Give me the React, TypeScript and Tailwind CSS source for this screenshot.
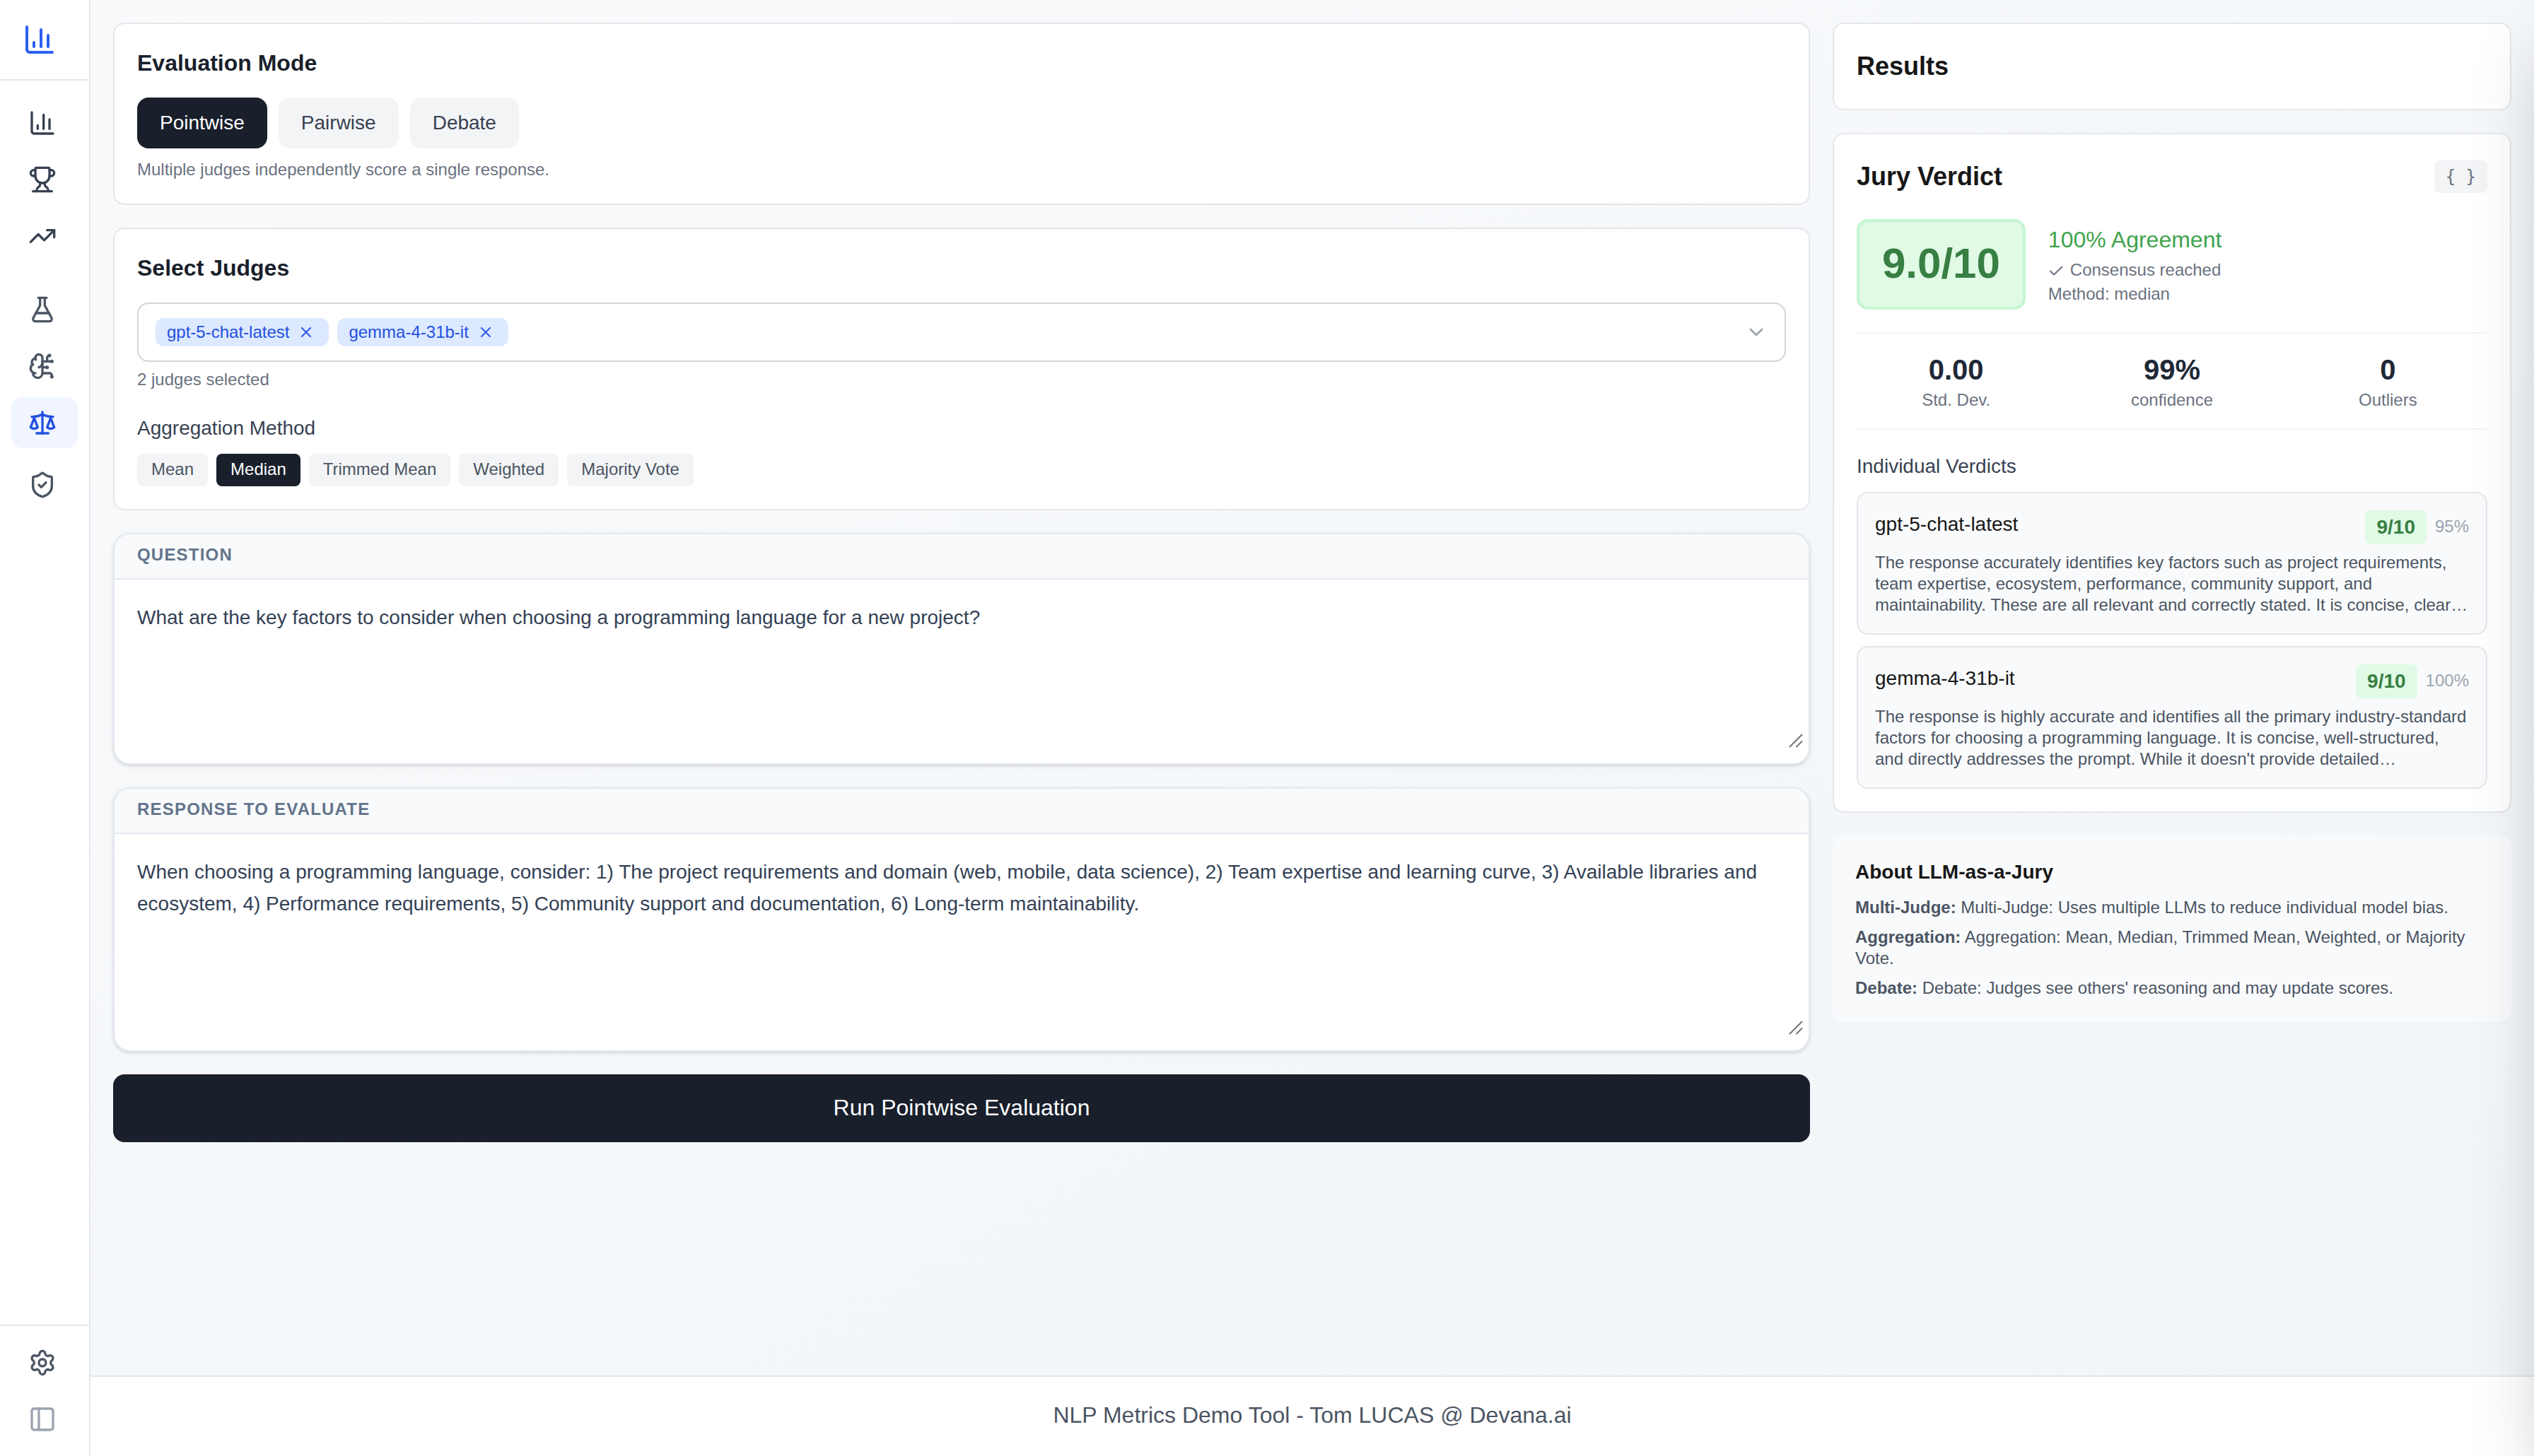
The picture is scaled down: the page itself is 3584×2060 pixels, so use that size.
import React from 'react';
import {
  BrainCircuit,
  ChartColumn,
  ChevronDown,
  FlaskConical,
  PanelLeft,
  Scale,
  Settings,
  ShieldCheck,
  TrendingUp,
  Trophy,
} from 'lucide-react';

const MODES = ['Pointwise', 'Pairwise', 'Debate'];
const JUDGES = ['gpt-5-chat-latest', 'gemma-4-31b-it'];
const METHODS = ['Mean', 'Median', 'Trimmed Mean', 'Weighted', 'Majority Vote'];

const STATS = [
  { value: '0.00', label: 'Std. Dev.' },
  { value: '99%', label: 'confidence' },
  { value: '0', label: 'Outliers' },
];

const VERDICTS = [
  {
    name: 'gpt-5-chat-latest',
    score: '9/10',
    confidence: '95%',
    lines: [
      'The response accurately identifies key factors such as project requirements,',
      'team expertise, ecosystem, performance, community support, and',
      'maintainability. These are all relevant and correctly stated. It is concise, clear…',
    ],
  },
  {
    name: 'gemma-4-31b-it',
    score: '9/10',
    confidence: '100%',
    lines: [
      'The response is highly accurate and identifies all the primary industry-standard',
      'factors for choosing a programming language. It is concise, well-structured,',
      "and directly addresses the prompt. While it doesn't provide detailed…",
    ],
  },
];

const ABOUT = [
  { term: 'Multi-Judge:', text: 'Multi-Judge: Uses multiple LLMs to reduce individual model bias.' },
  { term: 'Aggregation:', text: 'Aggregation: Mean, Median, Trimmed Mean, Weighted, or Majority Vote.' },
  { term: 'Debate:', text: "Debate: Judges see others' reasoning and may update scores." },
];

const NavItem: React.FC<{ icon: React.ElementType; className?: string }> = ({
  icon: Icon,
  className = 'text-[#4b5563]',
}) => (
  <a href="#" className={`flex h-[72px] items-center rounded-2xl px-6 ${className}`}>
    <Icon size={40} />
  </a>
);

const Sidebar: React.FC = () => (
  <aside className="flex w-32 shrink-0 flex-col border-r-2 border-[#e4e6ea] bg-white">
    <div className="flex h-[114px] items-center border-b-2 border-[#e4e6ea] px-8">
      <ChartColumn size={48} className="text-[#2b60f0]" />
    </div>

    <nav className="flex flex-1 flex-col px-4 pt-6">
      <div className="flex flex-col gap-2">
        <NavItem icon={ChartColumn} className="text-[#374151]" />
        <NavItem icon={Trophy} className="text-[#374151]" />
        <NavItem icon={TrendingUp} className="text-[#374151]" />
      </div>
      <div className="mt-8 flex flex-col gap-2">
        <NavItem icon={FlaskConical} />
        <NavItem icon={BrainCircuit} />
        <NavItem icon={Scale} className="bg-[#f0f5ff] text-[#2450e0]" />
      </div>
      <div className="mt-4 flex flex-col">
        <NavItem icon={ShieldCheck} />
      </div>
    </nav>

    <div className="flex flex-col gap-2 border-t-2 border-[#e4e6ea] p-4">
      <NavItem icon={Settings} />
      <NavItem icon={PanelLeft} className="text-[#9ca3af]" />
    </div>
  </aside>
);

const Card: React.FC<{ className?: string; children: React.ReactNode }> = ({ className = '', children }) => (
  <section className={`rounded-2xl border-2 border-[#e4e6ea] bg-white p-8 ${className}`}>{children}</section>
);

const TextPanel: React.FC<{ title: string; className: string; children: React.ReactNode }> = ({
  title,
  className,
  children,
}) => (
  <section
    className={`flex flex-col overflow-hidden rounded-3xl border-2 border-[#e2e8f0] bg-white shadow-[0_2px_6px_rgba(0,0,0,0.1),0_2px_4px_-2px_rgba(0,0,0,0.1)] ${className}`}
  >
    <div className="border-b-2 border-[#e2e8f0] bg-[#f8fafc] px-8 pt-[14px] pb-[18px] text-2xl leading-[30px] font-bold tracking-[1.2px] text-[#64748b] uppercase">
      {title}
    </div>
    <div className="relative flex-1 px-8 py-8 text-[28px] leading-[44.8px] text-[#334155]">
      {children}
      {/* Resize grip */}
      <svg
        className="absolute right-2 bottom-[22px]"
        width="20"
        height="20"
        viewBox="0 0 20 20"
        fill="none"
        stroke="#777777"
        strokeWidth="2"
        strokeLinecap="round"
      >
        <path d="M1.5 18.5 18.5 1.5M11 18.5 18.5 11" />
      </svg>
    </div>
  </section>
);

const Evaluation: React.FC = () => (
  <div className="flex w-[2400px] shrink-0 flex-col gap-8">
    <Card className="h-[258px]">
      <h3 className="mb-[26px] text-[32px] leading-[46px] font-bold text-[#191f2b]">Evaluation Mode</h3>
      <div className="flex gap-4">
        {MODES.map((mode, index) => (
          <button
            key={mode}
            className={`h-[72px] rounded-2xl px-8 text-[28px] leading-10 ${
              index === 0 ? 'bg-[#191f2b] text-white' : 'bg-[#f3f4f6] text-[#374151]'
            }`}
          >
            {mode}
          </button>
        ))}
      </div>
      <p className="mt-[15px] text-2xl leading-[30px] text-[#6b7280]">
        Multiple judges independently score a single response.
      </p>
    </Card>

    <Card className="h-[400px]">
      <h3 className="mb-[26px] text-[32px] leading-[46px] font-bold text-[#191f2b]">Select Judges</h3>
      <div className="flex h-[84px] items-center gap-3 rounded-2xl border-2 border-[#d1d5db] px-6">
        {JUDGES.map((judge) => (
          <span
            key={judge}
            className="flex h-10 items-center rounded-xl bg-[#dce9fe] pr-5 pl-4 text-2xl leading-[30px] text-[#2450e0]"
          >
            {judge}
            <svg className="ml-3" width="24" height="24" viewBox="0 0 24 24" fill="none" stroke="currentColor" strokeWidth="2">
              <path d="M5.4 5.4 18.6 18.6M18.6 5.4 5.4 18.6" />
            </svg>
          </span>
        ))}
        <ChevronDown size={32} className="ml-auto text-[#9ca3af]" />
      </div>
      <p className="mt-[10px] text-2xl leading-[30px] text-[#6b7280]">2 judges selected</p>
      <div className="mt-[34px] mb-4 text-[28px] leading-10 text-[#374151]">Aggregation Method</div>
      <div className="flex gap-3">
        {METHODS.map((method, index) => (
          <button
            key={method}
            className={`h-[46px] rounded-lg px-5 pb-0.5 text-2xl leading-[30px] ${
              index === 1 ? 'bg-[#191f2b] text-white' : 'bg-[#f3f4f6] text-[#4b5563]'
            }`}
          >
            {method}
          </button>
        ))}
      </div>
    </Card>

    <TextPanel title="Question" className="h-[328px]">
      What are the key factors to consider when choosing a programming language for a new project?
    </TextPanel>

    <TextPanel title="Response to Evaluate" className="h-[374px]">
      When choosing a programming language, consider: 1) The project requirements and domain (web, mobile, data
      science), 2) Team expertise and learning curve, 3) Available libraries and ecosystem, 4) Performance
      requirements, 5) Community support and documentation, 6) Long-term maintainability.
    </TextPanel>

    <button className="h-24 rounded-2xl bg-[#191f2b] pb-0.5 text-[32px] text-white">Run Pointwise Evaluation</button>
  </div>
);

const Results: React.FC = () => (
  <div className="flex flex-1 flex-col gap-8">
    <Card>
      <h2 className="text-4xl leading-[56px] font-bold text-[#171717]">Results</h2>
    </Card>

    <Card>
      <div className="flex items-center justify-between">
        <h2 className="text-4xl leading-[56px] font-bold text-[#171717]">Jury Verdict</h2>
        <button className="h-[46px] rounded-lg bg-[#f3f4f6] px-4 font-['DejaVu_Sans_Mono',monospace] text-2xl leading-[30px] text-[#6b7280]">
          {'{ }'}
        </button>
      </div>

      <div className="mt-8 flex gap-8">
        <div className="rounded-2xl border-4 border-[#c4f6d1] bg-[#e0fae6] px-8 pt-[23px] pb-[25px] text-6xl leading-[72px] font-bold text-[#377f42]">
          9.0/10
        </div>
        <div className="flex flex-col gap-1 pt-[5px]">
          <div className="text-[32px] leading-[48px] text-[#3ea34c]">100% Agreement</div>
          <div className="flex items-center text-2xl leading-[30px] text-[#6b7280]">
            <svg
              className="mr-[9px]"
              width="22"
              height="22"
              viewBox="0 0 22 22"
              fill="none"
              stroke="currentColor"
              strokeWidth="2"
            >
              <path d="M2.5 12 8 17.5 20 6" />
            </svg>
            Consensus reached
          </div>
          <div className="text-2xl leading-[30px] text-[#6b7280]">Method: median</div>
        </div>
      </div>

      <div className="mt-8 grid grid-cols-3 gap-6 border-y-2 border-[#f3f4f6] pt-6 pb-[25px] text-center">
        {STATS.map((stat) => (
          <div key={stat.label}>
            <div className="text-[40px] leading-[55px] font-bold text-[#1f2937]">{stat.value}</div>
            <div className="text-2xl leading-[30px] text-[#6b7280]">{stat.label}</div>
          </div>
        ))}
      </div>

      <h3 className="mt-8 mb-4 text-[28px] leading-10 text-[#374151]">Individual Verdicts</h3>
      <div className="flex flex-col gap-4">
        {VERDICTS.map((verdict) => (
          <div key={verdict.name} className="rounded-2xl border-2 border-[#e4e6ea] bg-[#f9fafb] px-6 pt-6 pb-[25px]">
            <div className="mb-[11px] flex items-start justify-between">
              <span className="text-[28px] leading-10 text-[#171717]">{verdict.name}</span>
              <div className="flex items-center gap-3">
                <span className="rounded-lg bg-[#e0fae6] px-4 py-1 text-[28px] leading-10 font-bold text-[#377f42]">
                  {verdict.score}
                </span>
                <span className="pb-0.5 text-2xl leading-[30px] text-[#9ca3af]">{verdict.confidence}</span>
              </div>
            </div>
            <p className="text-2xl leading-[30px] whitespace-nowrap text-[#4b5563]">
              {verdict.lines.map((line) => (
                <span key={line} className="block">
                  {line}
                </span>
              ))}
            </p>
          </div>
        ))}
      </div>
    </Card>

    <section className="rounded-2xl bg-[#f9fafb] p-8">
      <h3 className="mb-[15px] text-[28px] leading-10 font-bold text-[#171717]">About LLM-as-a-Jury</h3>
      <div className="flex flex-col gap-3 pb-px text-2xl leading-[30px] text-[#4b5563]">
        {ABOUT.map((item) => (
          <p key={item.term}>
            <strong className="font-bold">{item.term}</strong> {item.text}
          </p>
        ))}
      </div>
    </section>
  </div>
);

const App: React.FC = () => {
  return (
    <div className="relative flex h-[2060px] w-[3584px] overflow-hidden bg-white font-['Liberation_Sans',Arial,sans-serif]">
      <Sidebar />
      <div className="flex flex-1 flex-col">
        <main className="flex flex-1 items-start gap-8 bg-linear-to-br from-[#f9fafb] to-[#f1f5f9] p-8">
          <Evaluation />
          <Results />
        </main>
        <footer className="flex h-[114px] items-center justify-center border-t-2 border-[#e4e6ea] bg-white pb-1 text-[32px] text-[#4b5563]">
          NLP Metrics Demo Tool - Tom LUCAS @ Devana.ai
        </footer>
      </div>

      {/* Closed drawer, only its shadow reaches the page */}
      <div className="absolute top-0 left-full h-full w-[800px] shadow-[0_50px_100px_-24px_rgba(0,0,0,0.25)]"></div>
    </div>
  );
};

export default App;
